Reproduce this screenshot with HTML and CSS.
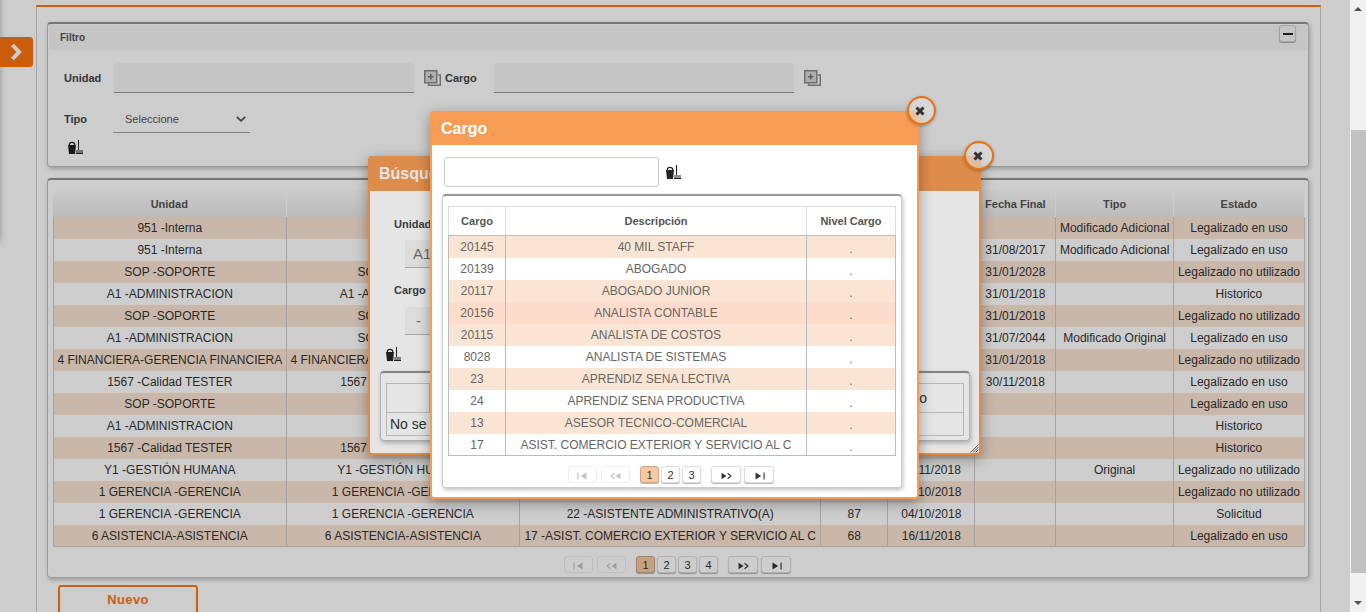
FILE: index.html
```html
<!DOCTYPE html>
<html lang="es">

<head>
  <meta charset="UTF-8">
  <title>Requisiciones</title>
  <link rel="stylesheet" href="styles.css">
</head>

<body>
  <svg class="defs" width="0" height="0">
    <symbol id="i-clean" viewBox="0 0 15 14">
      <path d="M0 5H8L7 14H1Z" />
      <path d="M1.3 5a2.7 2.7 0 0 1 5.4 0" fill="none" stroke="currentColor" stroke-width="1.2" />
      <rect x="10" y="0" width="1" height="10" />
      <rect x="8" y="10.5" width="7" height="1" />
      <rect x="8" y="12.5" width="7" height="1.5" />
    </symbol>
    <symbol id="i-add" viewBox="0 0 17 16">
      <rect x="0.75" y="0.75" width="12" height="12" fill="#d8d8d8" stroke="#8a8a8a" stroke-width="1.5" />
      <path d="M4 6.75H9.5M6.75 4V9.5" stroke="#777" stroke-width="1.5" fill="none" />
      <path d="M14 5H16.25V15.25H4.5V13.5" stroke="#8a8a8a" stroke-width="1.5" fill="none" />
    </symbol>
    <symbol id="i-close" viewBox="0 0 10 10">
      <path d="M1.5 1.5L8.5 8.5M8.5 1.5L1.5 8.5" stroke="#333" stroke-width="3" fill="none" />
    </symbol>
    <symbol id="i-first" viewBox="0 0 9 7">
      <rect x="0" y="0.5" width="1" height="6" />
      <path d="M8 0.5V6.5L3 3.5Z" />
    </symbol>
    <symbol id="i-prev" viewBox="0 0 10 7">
      <path d="M4 1L1 3.5L4 6" fill="none" stroke="currentColor" />
      <path d="M9.5 0.5V6.5L5 3.5Z" />
    </symbol>
    <symbol id="i-next" viewBox="0 0 10 7">
      <path d="M0.5 0.5V6.5L5 3.5Z" />
      <path d="M6 1L9 3.5L6 6" fill="none" stroke="currentColor" />
    </symbol>
    <symbol id="i-last" viewBox="0 0 9 7">
      <path d="M1 0.5V6.5L6 3.5Z" />
      <rect x="8" y="0.5" width="1" height="6" />
    </symbol>
  </svg>

  <div class="viewport">
    <div class="side-menu"></div>
    <button class="side-tab">
      <svg width="12" height="18" viewBox="0 0 12 18">
        <path d="M2.5 2L9 9L2.5 16" fill="none" stroke="#fff" stroke-width="4" />
      </svg>
    </button>

    <main class="page">
      <section class="panel filter">
        <div class="filter-head">
          <span>Filtro</span>
          <button class="btn-min"><i></i></button>
        </div>
        <div class="form-row first">
          <label class="lbl lbl-unidad">Unidad</label>
          <div class="fake-input"></div>
          <svg class="icon-add"><use href="#i-add" /></svg>
          <label class="lbl lbl-cargo">Cargo</label>
          <div class="fake-input"></div>
          <svg class="icon-add"><use href="#i-add" /></svg>
        </div>
        <div class="form-row second">
          <label class="lbl lbl-tipo">Tipo</label>
          <div class="fake-select">
            <span>Seleccione</span>
            <svg width="10" height="6" viewBox="0 0 10 6">
              <path d="M0.8 0.8L5 4.8L9.2 0.8" fill="none" stroke="#555" stroke-width="1.8" />
            </svg>
          </div>
        </div>
        <svg class="icon-clean filter-clean"><use href="#i-clean" /></svg>
      </section>

      <section class="panel results">
        <table class="grid">
          <colgroup>
            <col class="c1"><col class="c2"><col class="c3"><col class="c4">
            <col class="c5"><col class="c6"><col class="c7"><col class="c8">
          </colgroup>
          <thead>
            <tr>
              <th>Unidad</th>
              <th>Unidad Padre</th>
              <th>Cargo</th>
              <th>Cantidad</th>
              <th>Fecha Inicial</th>
              <th>Fecha Final</th>
              <th>Tipo</th>
              <th>Estado</th>
            </tr>
          </thead>
          <tbody>
            <tr><td>951 -Interna</td><td></td><td></td><td></td><td></td><td></td><td>Modificado Adicional</td><td>Legalizado en uso</td></tr>
            <tr><td>951 -Interna</td><td></td><td></td><td></td><td></td><td>31/08/2017</td><td>Modificado Adicional</td><td>Legalizado en uso</td></tr>
            <tr><td>SOP -SOPORTE</td><td>SOP -SOPORTE</td><td></td><td></td><td></td><td>31/01/2028</td><td></td><td>Legalizado no utilizado</td></tr>
            <tr><td>A1 -ADMINISTRACION</td><td>A1 -ADMINISTRACION</td><td></td><td></td><td></td><td>31/01/2018</td><td></td><td>Historico</td></tr>
            <tr><td>SOP -SOPORTE</td><td>SOP -SOPORTE</td><td></td><td></td><td></td><td>31/01/2018</td><td></td><td>Legalizado no utilizado</td></tr>
            <tr><td>A1 -ADMINISTRACION</td><td>SOP -SOPORTE</td><td></td><td></td><td></td><td>31/07/2044</td><td>Modificado Original</td><td>Legalizado en uso</td></tr>
            <tr><td>4 FINANCIERA-GERENCIA FINANCIERA</td><td>4 FINANCIERA-GERENCIA FINANCIERA</td><td></td><td></td><td></td><td>31/01/2018</td><td></td><td>Legalizado no utilizado</td></tr>
            <tr><td>1567 -Calidad TESTER</td><td>1567 -Calidad TESTER</td><td></td><td></td><td></td><td>30/11/2018</td><td></td><td>Legalizado en uso</td></tr>
            <tr><td>SOP -SOPORTE</td><td></td><td></td><td></td><td></td><td></td><td></td><td>Legalizado en uso</td></tr>
            <tr><td>A1 -ADMINISTRACION</td><td></td><td></td><td></td><td></td><td></td><td></td><td>Historico</td></tr>
            <tr><td>1567 -Calidad TESTER</td><td>1567 -Calidad TESTER</td><td></td><td></td><td></td><td></td><td></td><td>Historico</td></tr>
            <tr><td>Y1 -GESTIÓN HUMANA</td><td>Y1 -GESTIÓN HUMANA</td><td></td><td></td><td>30/11/2018</td><td></td><td>Original</td><td>Legalizado no utilizado</td></tr>
            <tr><td>1 GERENCIA -GERENCIA</td><td>1 GERENCIA -GERENCIA</td><td></td><td></td><td>04/10/2018</td><td></td><td></td><td>Legalizado no utilizado</td></tr>
            <tr><td>1 GERENCIA -GERENCIA</td><td>1 GERENCIA -GERENCIA</td><td>22 -ASISTENTE ADMINISTRATIVO(A)</td><td>87</td><td>04/10/2018</td><td></td><td></td><td>Solicitud</td></tr>
            <tr><td>6 ASISTENCIA-ASISTENCIA</td><td>6 ASISTENCIA-ASISTENCIA</td><td>17 -ASIST. COMERCIO EXTERIOR Y SERVICIO AL C</td><td>68</td><td>16/11/2018</td><td></td><td></td><td>Legalizado en uso</td></tr>
          </tbody>
        </table>
        <div class="pager pager-main">
          <button class="pg off"><svg class="pg-icon"><use href="#i-first" /></svg></button>
          <button class="pg off"><svg class="pg-icon"><use href="#i-prev" /></svg></button>
          <button class="pg num on">1</button>
          <button class="pg num">2</button>
          <button class="pg num">3</button>
          <button class="pg num">4</button>
          <button class="pg after"><svg class="pg-icon"><use href="#i-next" /></svg></button>
          <button class="pg"><svg class="pg-icon"><use href="#i-last" /></svg></button>
        </div>
      </section>

      <button class="btn-nuevo">Nuevo</button>
    </main>

    <div class="backdrop"></div>

    <div class="modal modal-busqueda">
      <button class="modal-close"><svg width="10" height="10"><use href="#i-close" /></svg></button>
      <h2 class="modal-title">Búsqueda</h2>
      <div class="busqueda-body">
        <label class="lbl busq-lbl busq-unidad">Unidad</label>
        <div class="busq-input">A1</div>
        <label class="lbl busq-lbl busq-cargo">Cargo</label>
        <div class="busq-input dash">-</div>
        <svg class="icon-clean busq-clean"><use href="#i-clean" /></svg>
        <div class="panel busq-panel">
          <table class="busq-table">
            <thead>
              <tr><th class="busq-c1"></th><th>Descripción</th><th class="busq-c3">Cargo</th></tr>
            </thead>
            <tbody>
              <tr><td colspan="3">No se encontraron registros</td></tr>
            </tbody>
          </table>
        </div>
        <svg class="resizer" width="9" height="9" viewBox="0 0 9 9">
          <path d="M8.5 0.5L0.5 8.5M8.5 3L3 8.5M8.5 5.5L5.5 8.5" stroke="#666" fill="none" />
        </svg>
      </div>
    </div>

    <div class="backdrop"></div>

    <div class="modal modal-cargo">
      <button class="modal-close"><svg width="10" height="10"><use href="#i-close" /></svg></button>
      <h2 class="modal-title">Cargo</h2>
      <div class="cargo-body">
        <div class="cargo-search">
          <input type="text" class="cargo-input">
          <svg class="icon-clean"><use href="#i-clean" /></svg>
        </div>
        <div class="panel cargo-panel">
          <table class="cargo-table">
            <thead>
              <tr><th class="cc1">Cargo</th><th class="cc2">Descripción</th><th>Nivel Cargo</th></tr>
            </thead>
            <tbody>
              <tr class="tint"><td>20145</td><td>40 MIL STAFF</td><td class="dot">.</td></tr>
              <tr><td>20139</td><td>ABOGADO</td><td class="dot">.</td></tr>
              <tr class="tint"><td>20117</td><td>ABOGADO JUNIOR</td><td class="dot">.</td></tr>
              <tr class="hover"><td>20156</td><td>ANALISTA CONTABLE</td><td class="dot">.</td></tr>
              <tr class="tint"><td>20115</td><td>ANALISTA DE COSTOS</td><td class="dot">.</td></tr>
              <tr><td>8028</td><td>ANALISTA DE SISTEMAS</td><td class="dot">.</td></tr>
              <tr class="tint"><td>23</td><td>APRENDIZ SENA LECTIVA</td><td class="dot">.</td></tr>
              <tr><td>24</td><td>APRENDIZ SENA PRODUCTIVA</td><td class="dot">.</td></tr>
              <tr class="tint"><td>13</td><td>ASESOR TECNICO-COMERCIAL</td><td class="dot">.</td></tr>
              <tr><td>17</td><td>ASIST. COMERCIO EXTERIOR Y SERVICIO AL C</td><td class="dot">.</td></tr>
            </tbody>
          </table>
          <div class="pager pager-cargo">
            <button class="pg off"><svg class="pg-icon"><use href="#i-first" /></svg></button>
            <button class="pg off"><svg class="pg-icon"><use href="#i-prev" /></svg></button>
            <button class="pg num on">1</button>
            <button class="pg num">2</button>
            <button class="pg num">3</button>
            <button class="pg after"><svg class="pg-icon"><use href="#i-next" /></svg></button>
            <button class="pg"><svg class="pg-icon"><use href="#i-last" /></svg></button>
          </div>
        </div>
      </div>
    </div>
  </div>

  <div class="scrollbar">
    <span class="arrow up"></span>
    <div class="thumb"></div>
    <span class="arrow down"></span>
  </div>
</body>

</html>
```

FILE: styles.css
```css
* {
  margin: 0;
  padding: 0;
  box-sizing: border-box;
}

html,
body {
  height: 612px;
  overflow: hidden;
}

body {
  display: flex;
  background-color: #fff;
  font-family: "Liberation Sans", Arial, sans-serif;
  font-size: 12px;
  color: #333;
}

button {
  font-family: inherit;
}

.defs {
  position: absolute;
}

.viewport {
  position: relative;
  flex: 1;
  height: 612px;
  overflow: hidden;
}

/* Scrollbar */
.scrollbar {
  position: relative;
  width: 16px;
  height: 612px;
  background-color: #f1f1f1;
}

.thumb {
  position: absolute;
  left: 1px;
  top: 130px;
  width: 15px;
  height: 443px;
  background-color: #c1c1c1;
}

.arrow {
  position: absolute;
  left: 4px;
  width: 0;
  height: 0;
  border-left: 4px solid transparent;
  border-right: 4px solid transparent;
}

.arrow.up {
  top: 7px;
  border-bottom: 4px solid #505050;
}

.arrow.down {
  bottom: 7px;
  border-top: 4px solid #505050;
}

/* Side menu */
.side-menu {
  position: absolute;
  left: -20px;
  top: -10px;
  width: 20px;
  height: 252px;
  box-shadow: 0 0 6px rgba(0, 0, 0, 0.3);
}

.side-tab {
  position: absolute;
  left: 0;
  top: 37px;
  display: flex;
  align-items: center;
  width: 33px;
  height: 30px;
  padding-left: 10px;
  border: 0;
  border-radius: 0 3px 3px 0;
  background-color: #fb7510;
}

/* Page */
.page {
  width: 1285px;
  height: 640px;
  margin: 5px 0 0 36px;
  padding: 15px 11px 15px 10px;
  border-top: 2px solid #fb7a18;
  border-left: 1px solid #ccc;
  border-right: 1px solid #ccc;
}

.panel {
  border: 1px solid #c2c2c2;
  border-top: 2px solid #939393;
  border-radius: 4px;
  box-shadow: 1px 2px 4px rgba(0, 0, 0, 0.25);
}

.filter {
  height: 145px;
  padding: 1px;
  margin-bottom: 11px;
}

.filter-head {
  display: flex;
  align-items: center;
  justify-content: space-between;
  height: 25px;
  padding: 0 11px 0 11px;
  background-color: #f5f5f5;
  font-size: 10px;
  font-weight: bold;
  color: #555;
}

.btn-min {
  display: flex;
  align-items: center;
  justify-content: center;
  width: 17px;
  height: 17px;
  margin: -8px 0 0 0;
  border: 1px solid #ccc;
  border-radius: 3px;
  background-color: #f5f5f5;
  box-shadow: 0 1px 1px rgba(0, 0, 0, 0.3);
}

.btn-min i {
  display: block;
  width: 10px;
  height: 2px;
  background-color: #222;
}

.form-row {
  display: flex;
  align-items: center;
  padding-left: 15px;
}

.form-row.first {
  margin-top: 13px;
  height: 30px;
}

.form-row.second {
  margin-top: 12px;
  height: 28px;
}

.lbl {
  font-size: 11px;
  font-weight: bold;
  color: #444;
}

.lbl-unidad {
  width: 50px;
}

.lbl-cargo {
  width: 49px;
  margin-left: 4px;
}

.lbl-tipo {
  width: 49px;
}

.fake-input {
  width: 300px;
  height: 30px;
  border-bottom: 1px solid #999;
  border-radius: 3px 3px 0 0;
  background-color: #f7f7f7;
}

.icon-add {
  width: 17px;
  height: 16px;
  margin-left: 10px;
}

.fake-select {
  display: flex;
  align-items: center;
  justify-content: space-between;
  width: 137px;
  height: 28px;
  padding: 1px 4px 0 12px;
  border-bottom: 1px solid #a5a5a5;
  font-size: 11px;
  color: #555;
}

.icon-clean {
  display: block;
  width: 15px;
  height: 14px;
  fill: #222;
  color: #222;
}

.filter-clean {
  margin: 7px 0 0 19px;
}

/* Results table */
.results {
  height: 400px;
  padding: 10px 4px 0 5px;
}

.grid {
  width: 1252px;
  table-layout: fixed;
  border-collapse: separate;
  border-spacing: 0;
}

.c1,
.c2 {
  width: 233.5px;
}

.c3 {
  width: 301px;
}

.c4 {
  width: 67px;
}

.c5 {
  width: 87px;
}

.c6 {
  width: 81px;
}

.c7 {
  width: 117.5px;
}

.c8 {
  width: 131px;
}

.grid th {
  height: 27px;
  border-right: 1px solid transparent;
  border-radius: 4px 4px 0 0;
  background: linear-gradient(#fcfcfc, #e9e9e9) padding-box;
  font-size: 11px;
  font-weight: bold;
  color: #555;
}

.grid td {
  height: 22px;
  border-right: 1px solid #ccc;
  text-align: center;
  white-space: nowrap;
  overflow: hidden;
}

.grid td:first-child {
  border-left: 1px solid #ccc;
}

.grid tbody tr:nth-child(odd) {
  background-color: #fae4d4;
}

.grid tbody tr:last-child td {
  border-bottom: 1px solid #ccc;
}

/* Pager */
.pager {
  display: flex;
  justify-content: center;
}

.pager-main {
  margin-top: 9px;
  padding-left: 2px;
}

.pager-cargo {
  margin-top: 10px;
  padding-left: 2px;
}

.pg {
  display: flex;
  align-items: center;
  justify-content: center;
  width: 30px;
  height: 17px;
  margin-right: 4px;
  border: 1px solid #ddd;
  border-radius: 3px;
  background-color: #fff;
  box-shadow: 0 1px 1px rgba(0, 0, 0, 0.3);
  font-size: 11px;
  color: #333;
}

.pg.off {
  width: 29px;
  border-color: #eee;
  box-shadow: none;
  color: #c4c4c4;
}

.pg.off + .num {
  margin-left: 6px;
}

.pg-icon {
  width: 11px;
  height: 8px;
  margin-top: 3px;
  fill: currentColor;
}

.pg.num {
  width: 19px;
  margin-right: 2px;
}

.pg.after {
  margin-left: 8px;
  margin-right: 3px;
}

.pg.on {
  border-color: #c9a88d;
  background-color: #f9c8a0;
}

.btn-nuevo {
  display: block;
  width: 140px;
  height: 30px;
  margin: 7px 0 0 11px;
  padding-bottom: 1px;
  border: 2px solid #fb7a18;
  border-radius: 3px;
  background-color: #fff;
  font-size: 13px;
  font-weight: bold;
  letter-spacing: 0.4px;
  color: #f4781a;
}

/* Modals */
.backdrop {
  position: absolute;
  top: 0;
  left: 0;
  width: 100%;
  height: 100%;
  background-color: rgba(0, 0, 0, 0.1);
}

.modal {
  position: absolute;
  border: 2px solid #f79c54;
  border-radius: 4px;
  background-color: #fff;
  box-shadow: 0 4px 14px rgba(0, 0, 0, 0.35);
}

.modal-title {
  height: 34px;
  margin-top: -2px;
  padding: 9px 9px 0;
  background-color: #f79c54;
  font-size: 16px;
  font-weight: bold;
  color: #fff;
}

.modal-close {
  position: absolute;
  top: -17px;
  display: flex;
  align-items: center;
  justify-content: center;
  width: 29px;
  height: 29px;
  padding-right: 3px;
  border: 2px solid #e8720f;
  border-radius: 50%;
  background-color: rgba(222, 222, 222, 0.6);
  box-shadow: 0 1px 3px rgba(0, 0, 0, 0.3);
  z-index: 1;
}

/* Busqueda modal */
.modal-busqueda {
  left: 368px;
  top: 156px;
  width: 613px;
  height: 299px;
}

.modal-busqueda .modal-title {
  height: 35px;
}

.modal-busqueda .modal-close {
  right: -15px;
  width: 30px;
}

.busqueda-body {
  position: relative;
  height: 262px;
  padding: 27px 0 0 10px;
}

.busq-lbl {
  display: block;
  margin-left: 14px;
}

.busq-input {
  width: 300px;
  height: 28px;
  margin: 10px 0 0 25px;
  padding: 5px 8px;
  border-bottom: 1px solid #bbb;
  border-radius: 3px 3px 0 0;
  background-color: #f5f5f5;
  font-size: 15px;
  color: #777;
}

.busq-input.dash {
  margin-top: 11px;
  padding-left: 11px;
}

.busq-cargo {
  margin-top: 16px;
}

.busq-clean {
  margin: 12px 0 0 6px;
}

.busq-panel {
  width: 590px;
  height: 70px;
  margin-top: 10px;
  padding: 10px 5px 0;
}

.busq-table {
  width: 578px;
  height: 53px;
  border-collapse: collapse;
}

.busq-table th,
.busq-table td {
  border: 1px solid #ccc;
  font-weight: normal;
  font-size: 14px;
  color: #333;
  text-align: left;
  padding-left: 3px;
}

.busq-table th {
  height: 29px;
}

.busq-c1 {
  width: 43px;
}

.busq-c3 {
  width: 78px;
}

.resizer {
  position: absolute;
  right: 0;
  bottom: 0;
}

/* Cargo modal */
.modal-cargo {
  left: 430px;
  top: 111px;
  width: 489px;
  height: 388px;
}

.modal-cargo .modal-close {
  right: -19px;
}

.cargo-body {
  padding: 12px 0 0 10px;
}

.cargo-search {
  display: flex;
  align-items: center;
  gap: 7px;
  padding-left: 2px;
}

.cargo-input {
  width: 215px;
  height: 30px;
  border: 1px solid #ccc;
  border-radius: 3px;
}

.cargo-panel {
  width: 460px;
  height: 294px;
  margin-top: 7px;
  padding: 10px 5px 0;
  border-color: #ccc;
  border-top-color: #999;
}

.cargo-table {
  width: 448px;
  table-layout: fixed;
  border-collapse: separate;
  border-spacing: 0;
  color: #666;
}

.cargo-table th {
  height: 30px;
  border-top: 1px solid #ddd;
  border-right: 1px solid #ddd;
  border-bottom: 1px solid #bbb;
  font-size: 11px;
  color: #555;
}

.cargo-table th:first-child {
  border-left: 1px solid #ddd;
}

.cc1 {
  width: 58px;
}

.cc2 {
  width: 301px;
}

.cargo-table td {
  height: 22px;
  border-right: 1px solid #bbb;
  text-align: center;
}

.cargo-table td:first-child {
  border-left: 1px solid #bbb;
}

.cargo-table tbody tr.tint {
  background-color: #fae5d4;
}

.cargo-table tbody tr.hover {
  background-color: #fddccb;
}

.cargo-table tbody tr:last-child td {
  border-bottom: 1px solid #bbb;
}

.dot {
  padding-top: 4px;
}
```
